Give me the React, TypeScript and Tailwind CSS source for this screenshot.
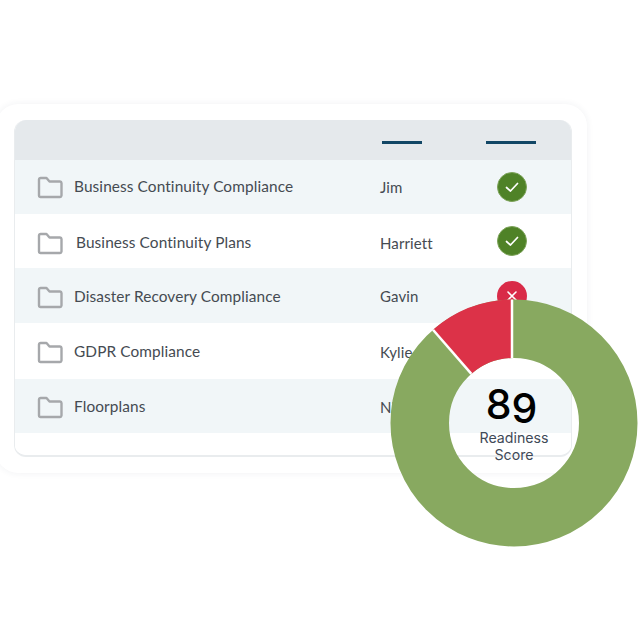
const rows = [
  { name: "Business Continuity Compliance", owner: "Jim", status: "ok", h: "h-[54px]", tint: true, textPad: "ml-[11px]", nudge: "" },
  { name: "Business Continuity Plans", owner: "Harriett", status: "ok", h: "h-[54px]", tint: false, textPad: "ml-[13px]", nudge: "pt-[4px]" },
  { name: "Disaster Recovery Compliance", owner: "Gavin", status: "bad", h: "h-[55px]", tint: true, textPad: "ml-[11px]", nudge: "pt-[2px]" },
  { name: "GDPR Compliance", owner: "Kylie", status: "", h: "h-[56px]", tint: false, textPad: "ml-[11px]", nudge: "pt-[2px]" },
  { name: "Floorplans", owner: "Nick", status: "", h: "h-[54px]", tint: true, textPad: "ml-[11px]", nudge: "pt-[2px]" },
];

function Folder() {
  return (
    <svg width="26" height="24" viewBox="0 0 26 24" fill="none" className="shrink-0">
      <path
        d="M2 5.500 V20.500 A1.600 1.600 0 0 0 3.600 22 H23 A1.600 1.600 0 0 0 24.500 20.500 V8 A1.600 1.600 0 0 0 23 6.500 H12.500 L9.500 3 H3.600 A1.600 1.600 0 0 0 2 4.600 Z"
        stroke="#a6a8ab"
        strokeWidth="2.400"
        strokeLinejoin="round"
      />
    </svg>
  );
}

function Status({ kind }: { kind: string }) {
  if (kind === "ok") {
    return (
      <span className="flex h-[30px] w-[30px] items-center justify-center rounded-full border border-[#7da35a] bg-[#4f8227]">
        <svg width="18" height="18" viewBox="0 0 18 18" fill="none">
          <path d="M3.500 9.500 L7.500 13 L14.500 5.500" stroke="#ffffff" strokeWidth="1.700" strokeLinecap="round" strokeLinejoin="round" />
        </svg>
      </span>
    );
  }
  if (kind === "bad") {
    return (
      <span className="flex h-[30px] w-[30px] items-center justify-center rounded-full bg-[#d92b48]">
        <svg width="14" height="14" viewBox="0 0 14 14" fill="none">
          <path d="M3 3 L11 11 M11 3 L3 11" stroke="#ffffff" strokeWidth="1.600" strokeLinecap="round" />
        </svg>
      </span>
    );
  }
  return null;
}

function Donut() {
  const c = 124;
  const ro = 123.5;
  const ri = 65;
  const top = c - 2;
  const topO = c - Math.sqrt(ro * ro - 4);
  const topI = c - Math.sqrt(ri * ri - 4);
  const angle = (-41 * Math.PI) / 180;
  const sx = c + ro * Math.sin(angle);
  const sy = c - ro * Math.cos(angle);
  const ix = c + ri * Math.sin(angle);
  const iy = c - ri * Math.cos(angle);
  return (
    <div className="absolute left-[389.500px] top-[299px] h-[248px] w-[248px]">
      <svg width="248" height="248" viewBox="0 0 248 248" className="block">
        <circle cx={c} cy={c} r={(ro + ri) / 2} fill="none" stroke="#88a960" strokeWidth={ro - ri} />
        <path
          d={`M ${top} ${topO} A ${ro} ${ro} 0 0 0 ${sx} ${sy} L ${ix} ${iy} A ${ri} ${ri} 0 0 1 ${top} ${topI} Z`}
          fill="#dc3248"
        />
        <path d={`M ${top} ${topO} V ${topI}`} stroke="#ffffff" strokeWidth="2.500" />
        <path d={`M ${sx} ${sy} L ${ix} ${iy}`} stroke="#ffffff" strokeWidth="2.500" />
      </svg>
      <div className="absolute inset-0 flex flex-col items-center justify-center pb-[1px] font-['Inter',sans-serif]">
        <div className="pr-[4px] text-[41px] font-medium leading-[44px] text-black">
          8<span className="inline-block translate-y-[4px]">9</span>
        </div>
        <div className="ml-[1px] mt-[3px] text-center text-[14.200px] leading-[17px] text-[#3f4a58]">
          Readiness
          <br />
          Score
        </div>
      </div>
    </div>
  );
}

export default function App() {
  return (
    <div className="relative h-[640px] w-[640px] overflow-hidden bg-white font-['Lato','Open_Sans',sans-serif]">
      <div className="pt-[104px]">
        <div className="ml-[-4px] w-[591px] rounded-[22px] bg-white pb-[16px] pl-[18px] pr-[15px] pt-[16px] shadow-[0_0_7px_rgba(40,60,80,0.07)]">
          <div className="overflow-hidden rounded-[12px] border-x border-b-2 border-[#e9ecee] bg-white">
            <div className="flex h-[40px] items-center bg-[#e5e9ec]">
              <div className="ml-[367px] mt-[4px] h-[3px] w-[40px] bg-[#124766]" />
              <div className="ml-[64px] mt-[4px] h-[3px] w-[50px] bg-[#124766]" />
            </div>
            {rows.map((r) => (
              <div key={r.name} className={`flex items-center ${r.h} ${r.tint ? "bg-[#f1f6f8]" : "bg-white"}`}>
                <div className={`ml-[22px] flex w-[343px] items-center ${r.nudge}`}>
                  <Folder />
                  <span className={`${r.textPad} text-[15.400px] tracking-[0.1px] text-[#454b52]`}>{r.name}</span>
                </div>
                <div className={`w-[102px] text-[15px] tracking-[0.1px] text-[#454b52] ${r.nudge}`}>{r.owner}</div>
                <div className="flex w-[60px] justify-center">
                  <Status kind={r.status} />
                </div>
              </div>
            ))}
            <div className="h-[22px] bg-white" />
          </div>
        </div>
      </div>
      <Donut />
    </div>
  );
}
